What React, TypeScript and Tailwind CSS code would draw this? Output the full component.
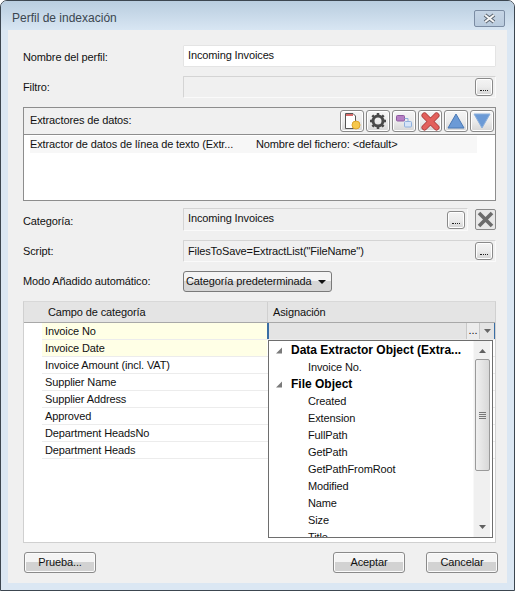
const font = 'font-["Liberation_Sans",Arial,sans-serif] text-[11px] tracking-[-0.12px] leading-[17px] text-[#111]';

function MoreButton() {
  return (
    <button className="w-[18px] h-[18px] rounded-[3px] border border-[#8a8a8a] bg-gradient-to-b from-[#f4f4f4] via-[#ececec] to-[#d4d4d4] shadow-[inset_0_0_0_1px_#fff] flex items-end justify-center pb-[4px] shrink-0">
      <span className="block w-[8px] h-[1px] border-b border-dotted border-[#222]" />
    </button>
  );
}

function ToolButton({ children }: { children: React.ReactNode }) {
  return (
    <button className="w-[24px] h-[22px] rounded-[3px] border border-[#8a8a8a] bg-gradient-to-b from-[#f6f6f6] via-[#ececec] to-[#d6d6d6] shadow-[inset_0_0_0_1px_#fff] flex items-center justify-center shrink-0">
      {children}
    </button>
  );
}

function DialogButton({ label, className }: { label: string; className?: string }) {
  return (
    <button className={`w-[72px] h-[21px] rounded-[3px] border border-[#8a8a8a] bg-gradient-to-b from-[#f4f4f4] from-45% to-[#d2d2d2] to-50% shadow-[inset_0_0_0_1px_#fbfbfb] ${className ?? ''}`}>
      {label}
    </button>
  );
}

const fields = [
  'Invoice No',
  'Invoice Date',
  'Invoice Amount (incl. VAT)',
  'Supplier Name',
  'Supplier Address',
  'Approved',
  'Department HeadsNo',
  'Department Heads',
];

const fileItems = ['Created', 'Extension', 'FullPath', 'GetPath', 'GetPathFromRoot', 'Modified', 'Name', 'Size', 'Title'];

function Expander() {
  return (
    <svg width="7" height="7" viewBox="0 0 7 7" className="shrink-0">
      <path d="M6 0.5V6.5H0z" fill="#7a7a7a" />
    </svg>
  );
}

function Dropdown() {
  return (
    <div className="absolute left-[244px] top-[38px] w-[225px] h-[198px] bg-white border border-[#6e6e6e] overflow-hidden flex">
      <div className="flex-1 pt-[1px] overflow-hidden">
        <div className="h-[17px] flex items-center pl-[7px] gap-[8px] font-bold text-[12px] tracking-normal text-[#000]"><Expander /><span className="whitespace-nowrap">Data Extractor Object (Extra...</span></div>
        <div className="h-[17px] pl-[39px]">Invoice No.</div>
        <div className="h-[17px] flex items-center pl-[7px] gap-[8px] font-bold text-[12px] tracking-normal text-[#000]"><Expander /><span>File Object</span></div>
        {fileItems.map((item) => (
          <div key={item} className="h-[17px] pl-[39px]">{item}</div>
        ))}
      </div>
      <div className="w-[17px] mr-[2px] bg-[#f0f0f0] border-l border-[#f8f8f8] flex flex-col items-center relative">
        <svg width="7" height="4" viewBox="0 0 7 4" className="mt-[8px]"><path d="M3.5 0L7 4H0z" fill="#606060" /></svg>
        <div className="absolute top-[18px] left-[1px] w-[15px] h-[112px] rounded-[2px] border border-[#9a9a9a] bg-gradient-to-r from-[#f0f0f0] to-[#d8d8d8] flex flex-col items-center justify-center gap-[1px]">
          <span className="block w-[7px] h-[1px] bg-[#777]" />
          <span className="block w-[7px] h-[1px] bg-[#777]" />
          <span className="block w-[7px] h-[1px] bg-[#777]" />
          <span className="block w-[7px] h-[1px] bg-[#777]" />
        </div>
        <svg width="7" height="4" viewBox="0 0 7 4" className="mt-auto mb-[8px]"><path d="M0 0H7L3.5 4z" fill="#606060" /></svg>
      </div>
    </div>
  );
}

export default function App() {
  return (
    <div className={`${font} w-[515px] h-[591px] bg-[#dbe7f3] border border-[#3c4650] rounded-t-[7px] flex flex-col overflow-hidden`}>
      <div className="h-[29px] shrink-0 pl-[11px] pr-[9px] pt-[9px] flex items-start justify-between bg-gradient-to-b from-[#b9cddf] to-[#d8e6f3]">
        <span className="text-[#3b4650] text-[12px] tracking-normal leading-[17px]">Perfil de indexación</span>
        <div className="w-[31px] h-[17px] rounded-[2px] border border-[#7b8ca3] bg-gradient-to-b from-[#c6d5e5] to-[#b9cbde] flex items-center justify-center">
          <svg width="15" height="11" viewBox="0 0 15 11">
            <path d="M3 2L12 9M12 2L3 9" stroke="#5a6470" strokeWidth="4" />
            <path d="M3 2L12 9M12 2L3 9" stroke="#f4f4f4" strokeWidth="2" />
          </svg>
        </div>
      </div>

      <div className="mx-[7px] mb-[7px] flex-1 bg-[#f0f0f0] pl-[15px] pr-[11px] pt-[15px] flex flex-col">
        <div className="flex items-center h-[22px]">
          <label className="w-[160px] pt-[2px]">Nombre del perfil:</label>
          <div className="flex-1 h-[22px] bg-white border border-[#e4e4e4] rounded-[1px] pl-[4px] pt-[1px]">Incoming Invoices</div>
        </div>

        <div className="flex items-center h-[22px] mt-[9px]">
          <label className="w-[160px] pt-[1px]">Filtro:</label>
          <div className="flex-1 h-[22px] bg-[#f0f0f0] border border-[#d4d4d4] border-b-[#fafafa] border-r-[#fafafa] rounded-[1px] flex items-center justify-end pr-[2px]">
            <MoreButton />
          </div>
        </div>

        <div className="mt-[9px] h-[94px] border border-[#8d8d8d] flex flex-col">
          <div className="h-[26px] bg-[#f0f0f0] shrink-0 flex items-center pl-[6px] pr-[1px]">
            <span className="flex-1 -mt-[2px]">Extractores de datos:</span>
            <div className="flex gap-[2px]">
              <ToolButton>
                <svg width="18" height="18" viewBox="0 0 18 18">
                  <path d="M2.5 1.5H10L12.5 4V16.5H2.5z" fill="#fff" stroke="#555" />
                  <path d="M3 2H10V4H3z" fill="#d66a6a" />
                  <circle cx="13" cy="13" r="4" fill="#f6c84c" stroke="#dda62e" />
                </svg>
              </ToolButton>
              <ToolButton>
                <svg width="18" height="18" viewBox="0 0 18 18">
                  <circle cx="9" cy="9" r="5" fill="none" stroke="#4a4a4a" strokeWidth="3" />
                  <path d="M9 1V17M1 9H17M3.3 3.3L14.7 14.7M14.7 3.3L3.3 14.7" stroke="#4a4a4a" strokeWidth="2.5" strokeDasharray="3 10" />
                </svg>
              </ToolButton>
              <ToolButton>
                <svg width="18" height="18" viewBox="0 0 18 18">
                  <rect x="1.5" y="3.5" width="8" height="5.5" rx="1" fill="#b67fc4" stroke="#8e5aa0" />
                  <rect x="9.5" y="9.5" width="7" height="5.5" rx="1" fill="#d6e4f7" stroke="#8fb0dd" />
                  <path d="M9.5 6.5H13V9.5" fill="none" stroke="#8fb0dd" />
                </svg>
              </ToolButton>
              <ToolButton>
                <svg width="19" height="19" viewBox="0 0 19 19">
                  <path d="M3.5 3.5L15.5 15.5M15.5 3.5L3.5 15.5" stroke="#a83a3a" strokeWidth="6" strokeLinecap="round" />
                  <path d="M3.5 3.5L15.5 15.5M15.5 3.5L3.5 15.5" stroke="#e2605c" strokeWidth="4.5" strokeLinecap="round" />
                </svg>
              </ToolButton>
              <ToolButton>
                <svg width="18" height="16" viewBox="0 0 18 16"><path d="M9 1L17 15H1z" fill="#6b9ad6" stroke="#4a78b4" /></svg>
              </ToolButton>
              <ToolButton>
                <svg width="18" height="16" viewBox="0 0 18 16"><path d="M1 1H17L9 15z" fill="#6b9ad6" stroke="#8cb0dc" /></svg>
              </ToolButton>
            </div>
          </div>
          <div className="flex-1 bg-white border-t border-[#8d8d8d] pl-[6px] pr-[18px] pt-[1px]">
            <div className="flex bg-[#f7f7f7] h-[17px]">
              <span className="w-[226px] whitespace-nowrap overflow-hidden">Extractor de datos de línea de texto (Extr...</span>
              <span>Nombre del fichero: &lt;default&gt;</span>
            </div>
          </div>
        </div>

        <div className="flex items-center h-[23px] mt-[7px]">
          <label className="w-[160px] pt-[3px]">Categoría:</label>
          <div className="flex-1 h-[23px] bg-[#f0f0f0] border border-[#d4d4d4] border-b-[#fafafa] border-r-[#fafafa] rounded-[1px] flex items-start justify-between pl-[4px] pr-[2px] pt-[1px]">
            <span>Incoming Invoices</span>
            <div className="mt-[1px]"><MoreButton /></div>
          </div>
          <button className="ml-[7px] w-[21px] h-[21px] border border-[#8a8a8a] rounded-[2px] bg-[#e8e8e8] flex items-center justify-center shrink-0">
            <svg width="17" height="17" viewBox="0 0 17 17"><path d="M2 2L15 15M15 2L2 15" stroke="#6c6c6c" strokeWidth="3.6" /></svg>
          </button>
        </div>

        <div className="flex items-center h-[22px] mt-[9px]">
          <label className="w-[160px]">Script:</label>
          <div className="flex-1 h-[22px] bg-[#f0f0f0] border border-[#d4d4d4] border-b-[#fafafa] border-r-[#fafafa] rounded-[1px] flex items-center justify-between pl-[4px] pr-[2px]">
            <span>FilesToSave=ExtractList("FileName")</span>
            <MoreButton />
          </div>
        </div>

        <div className="flex items-center h-[21px] mt-[9px]">
          <label className="w-[160px]">Modo Añadido automático:</label>
          <button className="w-[149px] h-[21px] rounded-[3px] border border-[#7a7a7a] bg-gradient-to-b from-[#f4f4f4] from-45% to-[#d6d6d6] to-50% flex items-center justify-between pl-[2px] pr-[5px] whitespace-nowrap">
            <span>Categoría predeterminada</span>
            <svg width="8" height="4" viewBox="0 0 8 4"><path d="M0 0H8L4 4z" fill="#111" /></svg>
          </button>
        </div>

        <div className="relative mt-[9px] h-[242px] bg-white border border-[#d0d0d0] border-t-[#d8d8d8]">
          <div className="h-[21px] bg-[#e4e4e4] border-b border-[#a8a8a8] flex">
            <div className="w-[244px] pl-[24px] pt-[2px] border-r border-[#d0d0d0]">Campo de categoría</div>
            <div className="pl-[5px] pt-[2px]">Asignación</div>
          </div>
          {fields.map((field, i) => (
            <div key={field} className="ml-[18px] h-[17px] flex border-b border-[#ececec]">
              <div className={`w-[225px] pl-[3px] whitespace-nowrap ${i < 2 ? 'bg-[#ffffe6]' : 'bg-white'}`}>{field}</div>
              {i === 0 && (
                <div className="flex-1 bg-[#e4e4e4] border-l-2 border-r border-l-[#3a6ea5] border-r-[#3a6ea5] flex justify-end">
                  <span className="w-[14px] h-[16px] border-x border-[#c8c8c8] bg-[#ececec] leading-[14px] text-center">...</span>
                  <span className="w-[14px] flex items-center justify-center">
                    <svg width="7" height="4" viewBox="0 0 7 4"><path d="M0 0H7L3.5 4z" fill="#666" /></svg>
                  </span>
                </div>
              )}
            </div>
          ))}
          <Dropdown />
        </div>

        <div className="mt-[9px] flex items-center">
          <DialogButton label="Prueba..." className="ml-[1px]" />
          <DialogButton label="Aceptar" className="ml-auto" />
          <DialogButton label="Cancelar" className="ml-[21px] mr-[-2px]" />
        </div>
      </div>
    </div>
  );
}
